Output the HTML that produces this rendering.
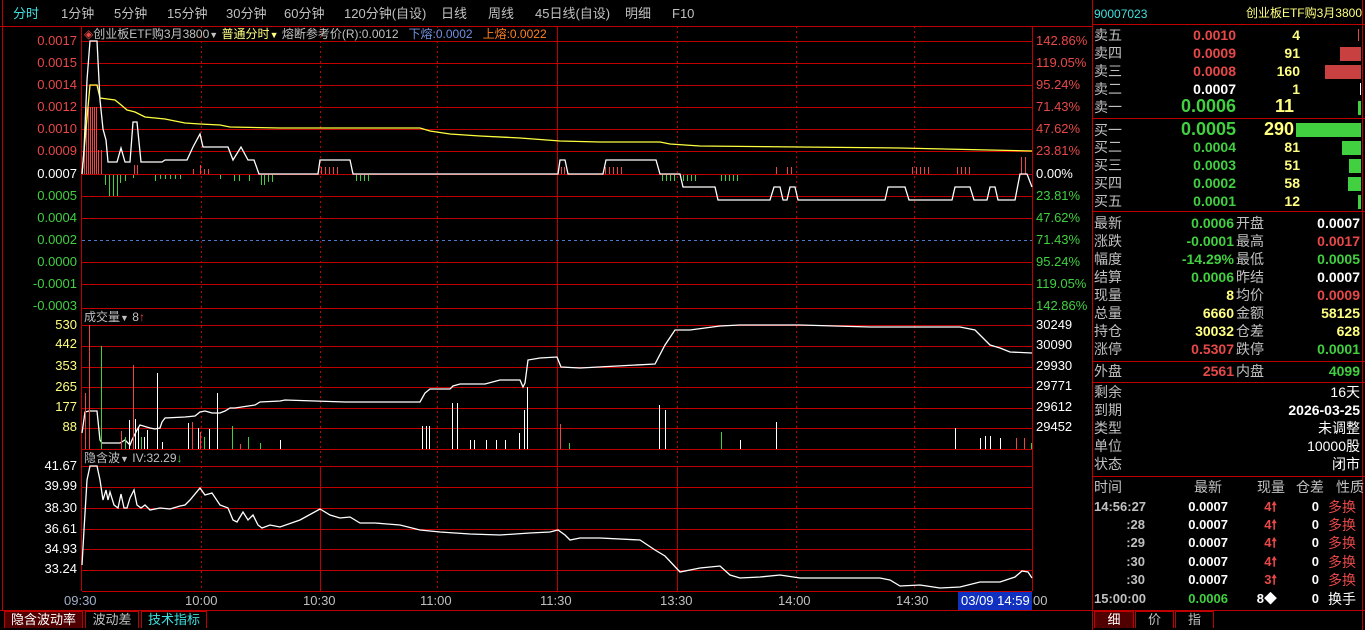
<!DOCTYPE html>
<html><head><meta charset="utf-8"><style>
*{margin:0;padding:0;box-sizing:border-box}
body{width:1365px;height:630px;background:#000;overflow:hidden;position:relative;font-family:"Liberation Sans","Noto Sans CJK SC",sans-serif;font-size:13px;color:#c0c0c0}
.a{position:absolute;white-space:nowrap;line-height:16px}
.r{text-align:right}
.red{color:#e84848}.grn{color:#40d040}.yel{color:#ffff80}.wht{color:#fff}.cy{color:#40e0e0}
.tab{position:absolute;top:611px;height:17px;border:1px solid #c00000;border-bottom:none;font-size:13px;text-align:center;line-height:16px}
.bs{font-weight:bold}
</style></head><body>
<div class="a cy" style="left:13px;top:6px">分时</div>
<div class="a" style="left:61px;top:6px">1分钟</div>
<div class="a" style="left:114px;top:6px">5分钟</div>
<div class="a" style="left:167px;top:6px">15分钟</div>
<div class="a" style="left:226px;top:6px">30分钟</div>
<div class="a" style="left:284px;top:6px">60分钟</div>
<div class="a" style="left:344px;top:6px">120分钟(自设)</div>
<div class="a" style="left:441px;top:6px">日线</div>
<div class="a" style="left:488px;top:6px">周线</div>
<div class="a" style="left:535px;top:6px">45日线(自设)</div>
<div class="a" style="left:625px;top:6px">明细</div>
<div class="a" style="left:672px;top:6px">F10</div>

<svg width="1365" height="630" style="position:absolute;left:0;top:0" shape-rendering="crispEdges">
<g stroke="#c00000" stroke-width="1" fill="none">
<line x1="0" y1="26.5" x2="1092" y2="26.5"/>
<line x1="2.5" y1="0" x2="2.5" y2="610"/>
<line x1="1092.5" y1="0" x2="1092.5" y2="630"/>
<line x1="1362.5" y1="0" x2="1362.5" y2="630"/>
<line x1="81.5" y1="26" x2="81.5" y2="591"/>
<line x1="1032.5" y1="26" x2="1032.5" y2="591"/>
<line x1="82" y1="41.5" x2="1032" y2="41.5"/><line x1="82" y1="63.5" x2="1032" y2="63.5"/>
<line x1="82" y1="85.5" x2="1032" y2="85.5"/><line x1="82" y1="107.5" x2="1032" y2="107.5"/>
<line x1="82" y1="129.5" x2="1032" y2="129.5"/><line x1="82" y1="151.5" x2="1032" y2="151.5"/>
<line x1="82" y1="174.5" x2="1032" y2="174.5"/><line x1="82" y1="196.5" x2="1032" y2="196.5"/>
<line x1="82" y1="218.5" x2="1032" y2="218.5"/>
<line x1="82" y1="262.5" x2="1032" y2="262.5"/><line x1="82" y1="284.5" x2="1032" y2="284.5"/>
<line x1="82" y1="308.5" x2="1032" y2="308.5"/>
<line x1="82" y1="325.5" x2="1032" y2="325.5"/><line x1="82" y1="346.5" x2="1032" y2="346.5"/>
<line x1="82" y1="367.5" x2="1032" y2="367.5"/><line x1="82" y1="387.5" x2="1032" y2="387.5"/>
<line x1="82" y1="408.5" x2="1032" y2="408.5"/><line x1="82" y1="428.5" x2="1032" y2="428.5"/>
<line x1="82" y1="449.5" x2="1032" y2="449.5"/>
<line x1="82" y1="466.5" x2="1032" y2="466.5"/><line x1="82" y1="487.5" x2="1032" y2="487.5"/>
<line x1="82" y1="508.5" x2="1032" y2="508.5"/><line x1="82" y1="529.5" x2="1032" y2="529.5"/>
<line x1="82" y1="549.5" x2="1032" y2="549.5"/><line x1="82" y1="570.5" x2="1032" y2="570.5"/>
<line x1="82" y1="591.5" x2="1032" y2="591.5"/>
<line x1="0" y1="610.5" x2="1092" y2="610.5"/>
<line x1="557.5" y1="26" x2="557.5" y2="591"/>
<line x1="320.5" y1="466" x2="320.5" y2="591"/><line x1="677.5" y1="466" x2="677.5" y2="591"/>
<line x1="1093" y1="24.5" x2="1365" y2="24.5"/>
<line x1="1093" y1="118.5" x2="1365" y2="118.5"/>
<line x1="1093" y1="211.5" x2="1365" y2="211.5"/>
<line x1="1093" y1="361.5" x2="1365" y2="361.5"/>
<line x1="1093" y1="382.5" x2="1365" y2="382.5"/>
<line x1="1093" y1="476.5" x2="1365" y2="476.5"/>
<line x1="1093" y1="610.5" x2="1365" y2="610.5"/>
</g>
<g stroke="#c00000" stroke-dasharray="2,3" fill="none">
<line x1="201.5" y1="26" x2="201.5" y2="591"/><line x1="320.5" y1="26" x2="320.5" y2="466"/>
<line x1="437.5" y1="26" x2="437.5" y2="591"/><line x1="677.5" y1="26" x2="677.5" y2="466"/>
<line x1="796.5" y1="26" x2="796.5" y2="591"/><line x1="914.5" y1="26" x2="914.5" y2="591"/>
</g>
<line x1="82" y1="240.5" x2="1032" y2="240.5" stroke="#4a7ad0" stroke-dasharray="3,3"/>
<g stroke="#e84848">
<line x1="84.5" y1="174" x2="84.5" y2="140"/><line x1="86.5" y1="174" x2="86.5" y2="107"/><line x1="88.5" y1="174" x2="88.5" y2="107"/>
<line x1="90.5" y1="174" x2="90.5" y2="107"/><line x1="92.5" y1="174" x2="92.5" y2="107"/><line x1="94.5" y1="174" x2="94.5" y2="107"/>
<line x1="96.5" y1="174" x2="96.5" y2="107"/><line x1="98.5" y1="174" x2="98.5" y2="150"/><line x1="101.5" y1="174" x2="101.5" y2="150"/>
<line x1="134.5" y1="174" x2="134.5" y2="165"/><line x1="137.5" y1="174" x2="137.5" y2="165"/>
<line x1="193.5" y1="174" x2="193.5" y2="169"/><line x1="200.5" y1="174" x2="200.5" y2="165"/><line x1="204.5" y1="174" x2="204.5" y2="169"/><line x1="208.5" y1="174" x2="208.5" y2="169"/>
<line x1="321.5" y1="174" x2="321.5" y2="167"/><line x1="325.5" y1="174" x2="325.5" y2="167"/><line x1="329.5" y1="174" x2="329.5" y2="167"/><line x1="333.5" y1="174" x2="333.5" y2="167"/><line x1="337.5" y1="174" x2="337.5" y2="167"/>
<line x1="561.5" y1="174" x2="561.5" y2="167"/><line x1="564.5" y1="174" x2="564.5" y2="167"/>
<line x1="605.5" y1="174" x2="605.5" y2="167"/><line x1="609.5" y1="174" x2="609.5" y2="167"/><line x1="613.5" y1="174" x2="613.5" y2="167"/><line x1="617.5" y1="174" x2="617.5" y2="167"/><line x1="621.5" y1="174" x2="621.5" y2="167"/>
<line x1="776.5" y1="174" x2="776.5" y2="167"/><line x1="787.5" y1="174" x2="787.5" y2="167"/><line x1="791.5" y1="174" x2="791.5" y2="167"/>
<line x1="912.5" y1="174" x2="912.5" y2="167"/><line x1="916.5" y1="174" x2="916.5" y2="167"/><line x1="920.5" y1="174" x2="920.5" y2="167"/><line x1="924.5" y1="174" x2="924.5" y2="167"/><line x1="928.5" y1="174" x2="928.5" y2="167"/>
<line x1="957.5" y1="174" x2="957.5" y2="167"/><line x1="961.5" y1="174" x2="961.5" y2="167"/><line x1="965.5" y1="174" x2="965.5" y2="167"/><line x1="969.5" y1="174" x2="969.5" y2="167"/>
<line x1="1021.5" y1="174" x2="1021.5" y2="157"/><line x1="1025.5" y1="174" x2="1025.5" y2="157"/>
</g>
<g stroke="#40d040">
<line x1="105.5" y1="175" x2="105.5" y2="185"/><line x1="109.5" y1="175" x2="109.5" y2="196"/><line x1="113.5" y1="175" x2="113.5" y2="196"/><line x1="117.5" y1="175" x2="117.5" y2="196"/><line x1="120.5" y1="175" x2="120.5" y2="183"/><line x1="125.5" y1="175" x2="125.5" y2="181"/>
<line x1="133.5" y1="175" x2="133.5" y2="178"/><line x1="155.5" y1="175" x2="155.5" y2="181"/><line x1="160.5" y1="175" x2="160.5" y2="179"/><line x1="165.5" y1="175" x2="165.5" y2="179"/><line x1="170.5" y1="175" x2="170.5" y2="179"/><line x1="175.5" y1="175" x2="175.5" y2="179"/><line x1="180.5" y1="175" x2="180.5" y2="179"/>
<line x1="220.5" y1="175" x2="220.5" y2="179"/><line x1="234.5" y1="175" x2="234.5" y2="181"/><line x1="239.5" y1="175" x2="239.5" y2="181"/><line x1="249.5" y1="175" x2="249.5" y2="181"/>
<line x1="261.5" y1="175" x2="261.5" y2="185"/><line x1="264.5" y1="175" x2="264.5" y2="185"/><line x1="268.5" y1="175" x2="268.5" y2="182"/><line x1="272.5" y1="175" x2="272.5" y2="182"/>
<line x1="356.5" y1="175" x2="356.5" y2="181"/><line x1="360.5" y1="175" x2="360.5" y2="181"/><line x1="364.5" y1="175" x2="364.5" y2="181"/><line x1="368.5" y1="175" x2="368.5" y2="181"/>
<line x1="662.5" y1="175" x2="662.5" y2="181"/><line x1="666.5" y1="175" x2="666.5" y2="181"/><line x1="670.5" y1="175" x2="670.5" y2="181"/><line x1="674.5" y1="175" x2="674.5" y2="181"/>
<line x1="683.5" y1="175" x2="683.5" y2="181"/><line x1="687.5" y1="175" x2="687.5" y2="181"/><line x1="691.5" y1="175" x2="691.5" y2="181"/><line x1="695.5" y1="175" x2="695.5" y2="181"/>
<line x1="721.5" y1="175" x2="721.5" y2="181"/><line x1="725.5" y1="175" x2="725.5" y2="181"/><line x1="729.5" y1="175" x2="729.5" y2="181"/><line x1="733.5" y1="175" x2="733.5" y2="181"/><line x1="737.5" y1="175" x2="737.5" y2="181"/>
</g>
<g fill="none" stroke-width="1.3" shape-rendering="auto">
<polyline stroke="#ffff40" points="82,174 85,140 90,85 97,85 100,98 115,100 120,104 127,110 135,112 145,117 155,118 165,119 185,123 200,124 220,125 230,127 280,128 420,128 430,131 450,134 480,136 520,138 560,141 600,142 660,142 670,144 700,146 800,147 900,148 1032,151"/>
<polyline stroke="#fff" points="82,174 84,150 87,80 90,41 97,41 100,100 103,129 106,140 108,162 117,162 121,148 125,162 130,162 133,122 137,122 141,162 162,162 165,160 187,160 193,147 200,134 203,147 228,147 233,160 241,147 248,160 254,160 259,174 318,174 320,160 350,160 353,174 558,174 560,160 565,160 568,174 603,174 606,160 656,160 660,174 680,174 683,187 715,187 718,200 770,200 774,187 780,187 783,200 787,200 790,187 795,187 798,200 885,200 888,187 905,187 909,200 952,200 955,187 970,187 974,200 987,200 990,187 995,187 998,200 1015,200 1020,174 1027,174 1032,187"/>
<polyline stroke="#fff" points="82,433 85,412 89,411 97,411 100,440 102,443 120,443 125,440 130,445 132,440 137,430 140,425 150,428 155,429 160,428 162,422 165,418 185,417 195,416 200,412 205,411 212,413 220,413 225,411 230,408 235,408 255,405 260,402 280,401 285,400 345,402 420,402 425,393 430,389 450,389 453,386 460,384 485,384 500,380 520,380 523,387 525,383 528,360 540,358 557,357 561,367 580,368 655,364 665,345 675,330 690,330 720,326 740,325 800,325 870,327 960,327 975,330 985,340 990,345 1000,348 1010,352 1032,353"/>
<polyline stroke="#fff" points="82,565 84,530 87,480 90,466 97,466 100,480 103,500 106,490 108,500 110,492 114,505 118,508 121,494 124,508 127,508 130,498 134,490 137,505 141,508 145,505 150,510 160,508 170,509 180,506 185,505 190,500 200,488 205,495 212,493 220,505 228,508 233,520 237,522 243,512 248,520 253,515 258,525 262,528 270,525 280,527 300,520 320,509 330,515 340,518 350,517 360,523 375,523 400,525 420,530 440,532 470,534 500,535 530,533 550,532 558,530 565,535 570,540 580,538 600,538 640,540 655,550 665,556 680,572 700,568 720,566 730,575 740,578 760,577 780,575 800,578 850,578 880,578 890,580 900,586 920,585 940,588 960,587 980,582 1000,582 1015,577 1022,571 1028,572 1032,578"/>
</g>
<g stroke="#e84848"><line x1="85.5" y1="449" x2="85.5" y2="393"/><line x1="89.5" y1="449" x2="89.5" y2="325"/><line x1="121.5" y1="449" x2="121.5" y2="431"/><line x1="133.5" y1="449" x2="133.5" y2="365"/><line x1="192.5" y1="449" x2="192.5" y2="422"/><line x1="200.5" y1="449" x2="200.5" y2="432"/><line x1="240.5" y1="449" x2="240.5" y2="444"/><line x1="560.5" y1="449" x2="560.5" y2="424"/><line x1="1016.5" y1="449" x2="1016.5" y2="438"/><line x1="1024.5" y1="449" x2="1024.5" y2="438"/></g>
<g stroke="#40d040"><line x1="101.5" y1="449" x2="101.5" y2="346"/><line x1="125.5" y1="449" x2="125.5" y2="437"/><line x1="141.5" y1="449" x2="141.5" y2="437"/><line x1="204.5" y1="449" x2="204.5" y2="437"/><line x1="232.5" y1="449" x2="232.5" y2="426"/><line x1="248.5" y1="449" x2="248.5" y2="437"/><line x1="260.5" y1="449" x2="260.5" y2="443"/><line x1="569.5" y1="449" x2="569.5" y2="443"/><line x1="721.5" y1="449" x2="721.5" y2="432"/><line x1="1031.5" y1="449" x2="1031.5" y2="443"/></g>
<g stroke="#fff"><line x1="129.5" y1="449" x2="129.5" y2="420"/><line x1="135.5" y1="449" x2="135.5" y2="419"/><line x1="138.5" y1="449" x2="138.5" y2="428"/><line x1="144.5" y1="449" x2="144.5" y2="437"/><line x1="147.5" y1="449" x2="147.5" y2="430"/><line x1="157.5" y1="449" x2="157.5" y2="373"/><line x1="162.5" y1="449" x2="162.5" y2="442"/><line x1="188.5" y1="449" x2="188.5" y2="423"/><line x1="198.5" y1="449" x2="198.5" y2="428"/><line x1="209.5" y1="449" x2="209.5" y2="429"/><line x1="217.5" y1="449" x2="217.5" y2="393"/><line x1="280.5" y1="449" x2="280.5" y2="440"/><line x1="422.5" y1="449" x2="422.5" y2="426"/><line x1="426.5" y1="449" x2="426.5" y2="426"/><line x1="429.5" y1="449" x2="429.5" y2="426"/><line x1="452.5" y1="449" x2="452.5" y2="403"/><line x1="457.5" y1="449" x2="457.5" y2="403"/><line x1="470.5" y1="449" x2="470.5" y2="440"/><line x1="474.5" y1="449" x2="474.5" y2="440"/><line x1="486.5" y1="449" x2="486.5" y2="440"/><line x1="496.5" y1="449" x2="496.5" y2="440"/><line x1="505.5" y1="449" x2="505.5" y2="440"/><line x1="519.5" y1="449" x2="519.5" y2="433"/><line x1="524.5" y1="449" x2="524.5" y2="410"/><line x1="527.5" y1="449" x2="527.5" y2="387"/><line x1="659.5" y1="449" x2="659.5" y2="405"/><line x1="665.5" y1="449" x2="665.5" y2="410"/><line x1="740.5" y1="449" x2="740.5" y2="440"/><line x1="776.5" y1="449" x2="776.5" y2="422"/><line x1="955.5" y1="449" x2="955.5" y2="428"/><line x1="980.5" y1="449" x2="980.5" y2="438"/><line x1="985.5" y1="449" x2="985.5" y2="436"/><line x1="990.5" y1="449" x2="990.5" y2="436"/><line x1="1000.5" y1="449" x2="1000.5" y2="438"/></g>
<rect x="1358" y="29" width="1" height="12" fill="#e04848"/>
<rect x="1340" y="47" width="21" height="14" fill="#c84040"/>
<rect x="1325" y="65" width="36" height="14" fill="#c84040"/>
<rect x="1360" y="83" width="1" height="12" fill="#fff"/>
<rect x="1358" y="101" width="3" height="14" fill="#40d040"/>
<rect x="1296" y="123" width="65" height="14" fill="#40d040"/>
<rect x="1342" y="141" width="19" height="14" fill="#40d040"/>
<rect x="1349" y="159" width="12" height="14" fill="#40d040"/>
<rect x="1348" y="177" width="13" height="14" fill="#40d040"/>
<rect x="1358" y="195" width="3" height="14" fill="#40d040"/>
<rect x="958" y="592" width="74" height="18" fill="#1030c0"/>
</svg>

<div class="a" style="left:84px;top:26px;font-size:12px"><span class="red">◈</span>创业板ETF购3月3800<span style="font-size:9px">▼</span> <span class="yel">普通分时<span style="font-size:9px">▼</span></span> 熔断参考价(R):0.0012 &nbsp;&nbsp;<span style="color:#7090e0">下熔:0.0002</span> &nbsp;&nbsp;<span style="color:#ff8020">上熔:0.0022</span></div>
<div class="a" style="left:84px;top:309px;font-size:12px">成交量<span style="font-size:9px">▼</span> 8<span class="red">↑</span></div>
<div class="a" style="left:84px;top:450px;font-size:12px">隐含波<span style="font-size:9px">▼</span> IV:32.29<span class="grn">↓</span></div>
<div class="a r red" style="left:20px;width:57px;top:33px">0.0017</div>
<div class="a r red" style="left:20px;width:57px;top:55px">0.0015</div>
<div class="a r red" style="left:20px;width:57px;top:77px">0.0014</div>
<div class="a r red" style="left:20px;width:57px;top:99px">0.0012</div>
<div class="a r red" style="left:20px;width:57px;top:121px">0.0010</div>
<div class="a r red" style="left:20px;width:57px;top:143px">0.0009</div>
<div class="a r wht" style="left:20px;width:57px;top:166px">0.0007</div>
<div class="a r grn" style="left:20px;width:57px;top:188px">0.0005</div>
<div class="a r grn" style="left:20px;width:57px;top:210px">0.0004</div>
<div class="a r grn" style="left:20px;width:57px;top:232px">0.0002</div>
<div class="a r grn" style="left:20px;width:57px;top:254px">0.0000</div>
<div class="a r grn" style="left:20px;width:57px;top:276px">-0.0001</div>
<div class="a r grn" style="left:20px;width:57px;top:298px">-0.0003</div>
<div class="a r yel" style="left:20px;width:57px;top:317px">530</div>
<div class="a r yel" style="left:20px;width:57px;top:336px">442</div>
<div class="a r yel" style="left:20px;width:57px;top:358px">353</div>
<div class="a r yel" style="left:20px;width:57px;top:379px">265</div>
<div class="a r yel" style="left:20px;width:57px;top:399px">177</div>
<div class="a r yel" style="left:20px;width:57px;top:419px">88</div>
<div class="a r wht" style="left:20px;width:57px;top:458px">41.67</div>
<div class="a r wht" style="left:20px;width:57px;top:478px">39.99</div>
<div class="a r wht" style="left:20px;width:57px;top:500px">38.30</div>
<div class="a r wht" style="left:20px;width:57px;top:521px">36.61</div>
<div class="a r wht" style="left:20px;width:57px;top:541px">34.93</div>
<div class="a r wht" style="left:20px;width:57px;top:561px">33.24</div>
<div class="a red" style="left:1036px;top:33px">142.86%</div>
<div class="a red" style="left:1036px;top:55px">119.05%</div>
<div class="a red" style="left:1036px;top:77px">95.24%</div>
<div class="a red" style="left:1036px;top:99px">71.43%</div>
<div class="a red" style="left:1036px;top:121px">47.62%</div>
<div class="a red" style="left:1036px;top:143px">23.81%</div>
<div class="a wht" style="left:1036px;top:166px">0.00%</div>
<div class="a grn" style="left:1036px;top:188px">23.81%</div>
<div class="a grn" style="left:1036px;top:210px">47.62%</div>
<div class="a grn" style="left:1036px;top:232px">71.43%</div>
<div class="a grn" style="left:1036px;top:254px">95.24%</div>
<div class="a grn" style="left:1036px;top:276px">119.05%</div>
<div class="a grn" style="left:1036px;top:298px">142.86%</div>
<div class="a wht" style="left:1036px;top:317px">30249</div>
<div class="a wht" style="left:1036px;top:337px">30090</div>
<div class="a wht" style="left:1036px;top:358px">29930</div>
<div class="a wht" style="left:1036px;top:378px">29771</div>
<div class="a wht" style="left:1036px;top:399px">29612</div>
<div class="a wht" style="left:1036px;top:419px">29452</div>
<div class="a" style="left:64px;top:593px;color:#a0b0c8">09:30</div>
<div class="a" style="left:185px;top:593px">10:00</div>
<div class="a" style="left:303px;top:593px">10:30</div>
<div class="a" style="left:420px;top:593px">11:00</div>
<div class="a" style="left:540px;top:593px">11:30</div>
<div class="a" style="left:660px;top:593px">13:30</div>
<div class="a" style="left:778px;top:593px">14:00</div>
<div class="a" style="left:896px;top:593px">14:30</div>
<div class="a wht" style="left:961px;top:593px">03/09 14:59</div>
<div class="a" style="left:1033px;top:593px">00</div>
<div class="tab wht" style="left:4px;width:79px;background:#500000">隐含波动率</div>
<div class="tab" style="left:85px;width:54px">波动差</div>
<div class="tab cy" style="left:141px;width:66px">技术指标</div>
<div class="tab wht" style="left:1094px;width:40px;background:#500000">细</div>
<div class="tab" style="left:1135px;width:39px">价</div>
<div class="tab" style="left:1175px;width:39px">指</div>

<div class="a cy" style="left:1094px;top:6px;font-size:12px">90007023</div>
<div class="a r yel" style="left:1200px;width:162px;top:5px;font-size:12px">创业板ETF购3月3800</div>
<div style="position:absolute;left:1094px;top:27px;width:268px;font-size:14px">
<div class="a" style="top:0">卖五</div><div class="a r red bs" style="left:60px;width:82px;top:0">0.0010</div><div class="a r yel bs" style="left:150px;width:56px;top:0">4</div>
<div class="a" style="top:18px">卖四</div><div class="a r red bs" style="left:60px;width:82px;top:18px">0.0009</div><div class="a r yel bs" style="left:150px;width:56px;top:18px">91</div>
<div class="a" style="top:36px">卖三</div><div class="a r red bs" style="left:60px;width:82px;top:36px">0.0008</div><div class="a r yel bs" style="left:150px;width:56px;top:36px">160</div>
<div class="a" style="top:54px">卖二</div><div class="a r wht bs" style="left:60px;width:82px;top:54px">0.0007</div><div class="a r yel bs" style="left:150px;width:56px;top:54px">1</div>
<div class="a" style="top:72px">卖一</div><div class="a r grn bs" style="left:40px;width:102px;top:71px;font-size:18px">0.0006</div><div class="a r yel bs" style="left:144px;width:56px;top:71px;font-size:18px">11</div>
<div class="a" style="top:95px">买一</div><div class="a r grn bs" style="left:40px;width:102px;top:94px;font-size:18px">0.0005</div><div class="a r yel bs" style="left:144px;width:56px;top:94px;font-size:18px">290</div>
<div class="a" style="top:112px">买二</div><div class="a r grn bs" style="left:60px;width:82px;top:112px">0.0004</div><div class="a r yel bs" style="left:150px;width:56px;top:112px">81</div>
<div class="a" style="top:130px">买三</div><div class="a r grn bs" style="left:60px;width:82px;top:130px">0.0003</div><div class="a r yel bs" style="left:150px;width:56px;top:130px">51</div>
<div class="a" style="top:148px">买四</div><div class="a r grn bs" style="left:60px;width:82px;top:148px">0.0002</div><div class="a r yel bs" style="left:150px;width:56px;top:148px">58</div>
<div class="a" style="top:166px">买五</div><div class="a r grn bs" style="left:60px;width:82px;top:166px">0.0001</div><div class="a r yel bs" style="left:150px;width:56px;top:166px">12</div>

<div class="a" style="top:188px">最新</div><div class="a r grn bs" style="left:50px;width:90px;top:188px">0.0006</div><div class="a" style="left:142px;top:188px">开盘</div><div class="a r wht bs" style="left:180px;width:86px;top:188px">0.0007</div>
<div class="a" style="top:206px">涨跌</div><div class="a r grn bs" style="left:50px;width:90px;top:206px">-0.0001</div><div class="a" style="left:142px;top:206px">最高</div><div class="a r red bs" style="left:180px;width:86px;top:206px">0.0017</div>
<div class="a" style="top:224px">幅度</div><div class="a r grn bs" style="left:50px;width:90px;top:224px">-14.29%</div><div class="a" style="left:142px;top:224px">最低</div><div class="a r grn bs" style="left:180px;width:86px;top:224px">0.0005</div>
<div class="a" style="top:242px">结算</div><div class="a r grn bs" style="left:50px;width:90px;top:242px">0.0006</div><div class="a" style="left:142px;top:242px">昨结</div><div class="a r wht bs" style="left:180px;width:86px;top:242px">0.0007</div>
<div class="a" style="top:260px">现量</div><div class="a r yel bs" style="left:50px;width:90px;top:260px">8</div><div class="a" style="left:142px;top:260px">均价</div><div class="a r red bs" style="left:180px;width:86px;top:260px">0.0009</div>
<div class="a" style="top:278px">总量</div><div class="a r yel bs" style="left:50px;width:90px;top:278px">6660</div><div class="a" style="left:142px;top:278px">金额</div><div class="a r yel bs" style="left:180px;width:86px;top:278px">58125</div>
<div class="a" style="top:296px">持仓</div><div class="a r yel bs" style="left:50px;width:90px;top:296px">30032</div><div class="a" style="left:142px;top:296px">仓差</div><div class="a r yel bs" style="left:180px;width:86px;top:296px">628</div>
<div class="a" style="top:314px">涨停</div><div class="a r red bs" style="left:50px;width:90px;top:314px">0.5307</div><div class="a" style="left:142px;top:314px">跌停</div><div class="a r grn bs" style="left:180px;width:86px;top:314px">0.0001</div>
<div class="a" style="top:336px">外盘</div><div class="a r red bs" style="left:50px;width:90px;top:336px">2561</div><div class="a" style="left:142px;top:336px">内盘</div><div class="a r grn bs" style="left:180px;width:86px;top:336px">4099</div>
<div class="a" style="top:357px">剩余</div><div class="a r wht" style="left:120px;width:146px;top:357px">16天</div>
<div class="a" style="top:375px">到期</div><div class="a r wht bs" style="left:120px;width:146px;top:375px">2026-03-25</div>
<div class="a" style="top:393px">类型</div><div class="a r wht" style="left:120px;width:146px;top:393px">未调整</div>
<div class="a" style="top:411px">单位</div><div class="a r wht" style="left:120px;width:146px;top:411px">10000股</div>
<div class="a" style="top:429px">状态</div><div class="a r wht" style="left:120px;width:146px;top:429px">闭市</div>
<div class="a" style="top:452px">时间</div><div class="a" style="left:100px;top:452px">最新</div><div class="a" style="left:163px;top:452px">现量</div><div class="a" style="left:202px;top:452px">仓差</div><div class="a" style="left:242px;top:452px">性质</div>
</div>
<div style="position:absolute;left:1094px;top:499px;width:268px;font-size:13px">
<div class="a bs" style="top:0">14:56:27</div><div class="a r wht bs" style="left:60px;width:74px;top:0">0.0007</div><div class="a r red bs" style="left:140px;width:43px;top:0">4🠕</div><div class="a r wht bs" style="left:195px;width:30px;top:0">0</div><div class="a red" style="left:234px;top:0;font-size:14px">多换</div>
<div class="a r bs" style="width:51px;top:18px">:28</div><div class="a r wht bs" style="left:60px;width:74px;top:18px">0.0007</div><div class="a r red bs" style="left:140px;width:43px;top:18px">4🠕</div><div class="a r wht bs" style="left:195px;width:30px;top:18px">0</div><div class="a red" style="left:234px;top:18px;font-size:14px">多换</div>
<div class="a r bs" style="width:51px;top:36px">:29</div><div class="a r wht bs" style="left:60px;width:74px;top:36px">0.0007</div><div class="a r red bs" style="left:140px;width:43px;top:36px">4🠕</div><div class="a r wht bs" style="left:195px;width:30px;top:36px">0</div><div class="a red" style="left:234px;top:36px;font-size:14px">多换</div>
<div class="a r bs" style="width:51px;top:55px">:30</div><div class="a r wht bs" style="left:60px;width:74px;top:55px">0.0007</div><div class="a r red bs" style="left:140px;width:43px;top:55px">4🠕</div><div class="a r wht bs" style="left:195px;width:30px;top:55px">0</div><div class="a red" style="left:234px;top:55px;font-size:14px">多换</div>
<div class="a r bs" style="width:51px;top:73px">:30</div><div class="a r wht bs" style="left:60px;width:74px;top:73px">0.0007</div><div class="a r red bs" style="left:140px;width:43px;top:73px">3🠕</div><div class="a r wht bs" style="left:195px;width:30px;top:73px">0</div><div class="a red" style="left:234px;top:73px;font-size:14px">多换</div>
<div class="a bs" style="top:92px">15:00:00</div><div class="a r grn bs" style="left:60px;width:74px;top:92px">0.0006</div><div class="a r wht bs" style="left:140px;width:43px;top:92px">8◆</div><div class="a r wht bs" style="left:195px;width:30px;top:92px">0</div><div class="a wht" style="left:234px;top:92px;font-size:14px">换手</div>
</div>
</body></html>
